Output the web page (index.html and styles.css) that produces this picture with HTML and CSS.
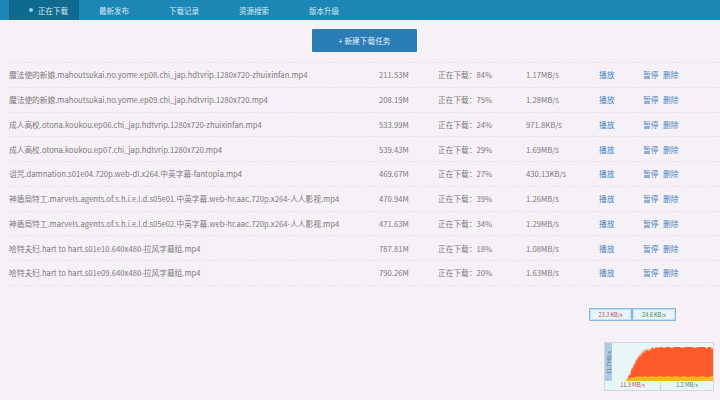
FILE: index.html
```html
<!DOCTYPE html>
<html lang="zh">
<head>
<meta charset="utf-8">
<link rel="stylesheet" href="styles.css">
</head>
<body>
<nav class="nav">
  <a class="tab active"><span class="dot"></span>正在下载</a>
  <a class="tab">最新发布</a>
  <a class="tab">下载记录</a>
  <a class="tab">资源搜索</a>
  <a class="tab">版本升级</a>
</nav>
<main class="content">
  <div class="toolbar"><button class="new-btn">+ 新建下载任务</button></div>
  <div class="list">
    <div class="row"><span class="name">魔法使的新娘.mahoutsukai.no.yome.ep08.chi_jap.hdtvrip.1280x720-zhuixinfan.mp4</span><span class="size">211.53M</span><span class="status">正在下载：84%</span><span class="speed">1.17MB/s</span><a class="act">播放</a><a class="act">暂停</a><a class="act">删除</a></div>
    <div class="row"><span class="name">魔法使的新娘.mahoutsukai.no.yome.ep09.chi_jap.hdtvrip.1280x720.mp4</span><span class="size">208.19M</span><span class="status">正在下载：75%</span><span class="speed">1.28MB/s</span><a class="act">播放</a><a class="act">暂停</a><a class="act">删除</a></div>
    <div class="row"><span class="name">成人高校.otona.koukou.ep06.chi_jap.hdtvrip.1280x720-zhuixinfan.mp4</span><span class="size">533.99M</span><span class="status">正在下载：24%</span><span class="speed">971.8KB/s</span><a class="act">播放</a><a class="act">暂停</a><a class="act">删除</a></div>
    <div class="row"><span class="name">成人高校.otona.koukou.ep07.chi_jap.hdtvrip.1280x720.mp4</span><span class="size">539.43M</span><span class="status">正在下载：29%</span><span class="speed">1.69MB/s</span><a class="act">播放</a><a class="act">暂停</a><a class="act">删除</a></div>
    <div class="row"><span class="name">诅咒.damnation.s01e04.720p.web-dl.x264.中英字幕-fantopia.mp4</span><span class="size">469.67M</span><span class="status">正在下载：27%</span><span class="speed">430.13KB/s</span><a class="act">播放</a><a class="act">暂停</a><a class="act">删除</a></div>
    <div class="row"><span class="name">神盾局特工.marvels.agents.of.s.h.i.e.l.d.s05e01.中英字幕.web-hr.aac.720p.x264-人人影视.mp4</span><span class="size">470.94M</span><span class="status">正在下载：39%</span><span class="speed">1.26MB/s</span><a class="act">播放</a><a class="act">暂停</a><a class="act">删除</a></div>
    <div class="row"><span class="name">神盾局特工.marvels.agents.of.s.h.i.e.l.d.s05e02.中英字幕.web-hr.aac.720p.x264-人人影视.mp4</span><span class="size">471.63M</span><span class="status">正在下载：34%</span><span class="speed">1.29MB/s</span><a class="act">播放</a><a class="act">暂停</a><a class="act">删除</a></div>
    <div class="row"><span class="name">哈特夫妇.hart to hart.s01e10.640x480-拉风字幕组.mp4</span><span class="size">787.81M</span><span class="status">正在下载：18%</span><span class="speed">1.08MB/s</span><a class="act">播放</a><a class="act">暂停</a><a class="act">删除</a></div>
    <div class="row"><span class="name">哈特夫妇.hart to hart.s01e09.640x480-拉风字幕组.mp4</span><span class="size">790.26M</span><span class="status">正在下载：20%</span><span class="speed">1.63MB/s</span><a class="act">播放</a><a class="act">暂停</a><a class="act">删除</a></div>
  </div>
</main>

<div class="speedbox">
  <span class="cell up">23.3 KB/s</span>
  <span class="cell down">24.6 KB/s</span>
</div>

<div class="monitor">
  <div class="mon-top">
    <div class="yaxis"><span>11.7 MB/s</span></div>
    <div class="plot">
      <svg viewBox="0 0 101 36" preserveAspectRatio="none" width="101" height="36">
        <line x1="18" y1="0" x2="18" y2="36" class="grid"/>
        <line x1="43" y1="0" x2="43" y2="36" class="grid"/>
        <line x1="68" y1="0" x2="68" y2="36" class="grid"/>
        <line x1="93" y1="0" x2="93" y2="36" class="grid"/>
        <polygon class="red" points="14,36 15,34 16,33 17,29 18,31 19,26 20,22 21,24 22,18 23,20 24,14 25,16 26,11 27,13 28,8 29,12 30,6 31,9 32,4 33,8 34,3 35,6 36,4 37,7 38,3 39,5 40,2 42,4 44,2 46,3 48,2 50,2 52,3 54,2 57,2 60,3 62,2 65,2 68,2 70,3 73,2 76,2 80,2 83,3 86,2 90,2 93,2 95,4 96,2 99,2 100,5 101,2 101,36"/>
        <polygon class="yel" points="14,36 15,34 18,33 20,32 22,33 24,31 26,32 28,31 30,32 33,31 36,32 40,31 44,32 48,31 52,32 56,31 60,32 64,31 68,32 72,31 76,32 80,31 85,32 90,31 95,32 101,31 101,36"/>
      </svg>
    </div>
  </div>
  <div class="mon-bottom">
    <span class="mcell up">11.3 MB/s</span>
    <span class="mcell down">1.2 MB/s</span>
  </div>
</div>
</body>
</html>
```

FILE: styles.css
```css
* { box-sizing: border-box; }
html, body { margin: 0; padding: 0; }
body {
  width: 720px;
  height: 400px;
  overflow: hidden;
  background: #f6f1f6;
  font-family: "Noto Sans CJK SC", "Noto Sans", sans-serif;
  font-size: 7.7px;
  color: #777;
  position: relative;
}
.nav {
  display: flex;
  height: 20px;
  background: #1c86b5;
  padding-left: 9px;
}
.tab {
  width: 70px;
  display: flex;
  align-items: center;
  justify-content: center;
  color: #d8ebf5;
  font-size: 7.5px;
}
.tab.active {
  background: #0f6a8f;
  justify-content: flex-start;
  padding-left: 20px;
}
.dot {
  width: 4px;
  height: 4px;
  border-radius: 50%;
  background: #8fd0f0;
  margin-right: 5px;
}
.content {
  padding-left: 9px;
}
.toolbar {
  display: flex;
  justify-content: center;
  padding-top: 9px;
  padding-bottom: 10px;
}
.new-btn {
  width: 105px;
  height: 23px;
  border: none;
  border-radius: 1px;
  background: #2a7db4;
  color: #e6f1f8;
  font-family: inherit;
  font-size: 7.7px;
  padding: 0;
}
.list {
  border-top: 1px dashed #dbe9f2;
}
.row {
  display: grid;
  grid-template-columns: 370px 59px 88px 73px 44px 20px 40px;
  align-items: center;
  height: 24.75px;
  border-bottom: 1px dashed #dbe9f2;
  white-space: nowrap;
}
.name, .size, .status, .speed { color: #7a7a7a; }
.act { color: #4a85bd; }
.speedbox {
  position: absolute;
  left: 589px;
  top: 308px;
  display: flex;
  gap: 2px;
  padding: 1px;
  background: #8ab8dc;
}
.cell {
  height: 11px;
  line-height: 10px;
  background: #e8f4fa;
  font-size: 5.5px;
  text-align: center;
  border: 1px solid #c7dfee;
}
.cell.up { width: 41px; color: #b0504a; }
.cell.down { width: 42px; color: #3f8a4a; }
.monitor {
  position: absolute;
  left: 604px;
  top: 342px;
  width: 110px;
  border: 1px solid #d8d8d8;
  background: #f0f4f4;
}
.mon-top {
  display: flex;
  height: 38px;
}
.yaxis {
  width: 8px;
  background: #a9cbe8;
  display: flex;
  align-items: center;
  justify-content: center;
  overflow: hidden;
}
.yaxis span {
  transform: rotate(-90deg);
  font-size: 5px;
  color: #6a6a6a;
  white-space: nowrap;
}
.plot {
  flex: 1;
  background: #e8f6f8;
  display: flex;
  align-items: flex-end;
}
.plot svg { display: block; }
.grid { stroke: #ffffff; stroke-width: 0.5; opacity: .6; }
.red { fill: #ff5a2a; }
.yel { fill: #f7b51e; }
.mon-bottom {
  display: flex;
  gap: 1px;
  background: #c8dce8;
  height: 9px;
}
.mcell {
  background: #e8f6f8;
  font-size: 5.5px;
  line-height: 9px;
  text-align: center;
}
.mcell.up { width: 55px; color: #b04a40; }
.mcell.down { flex: 1; color: #3f7f70; }
```
